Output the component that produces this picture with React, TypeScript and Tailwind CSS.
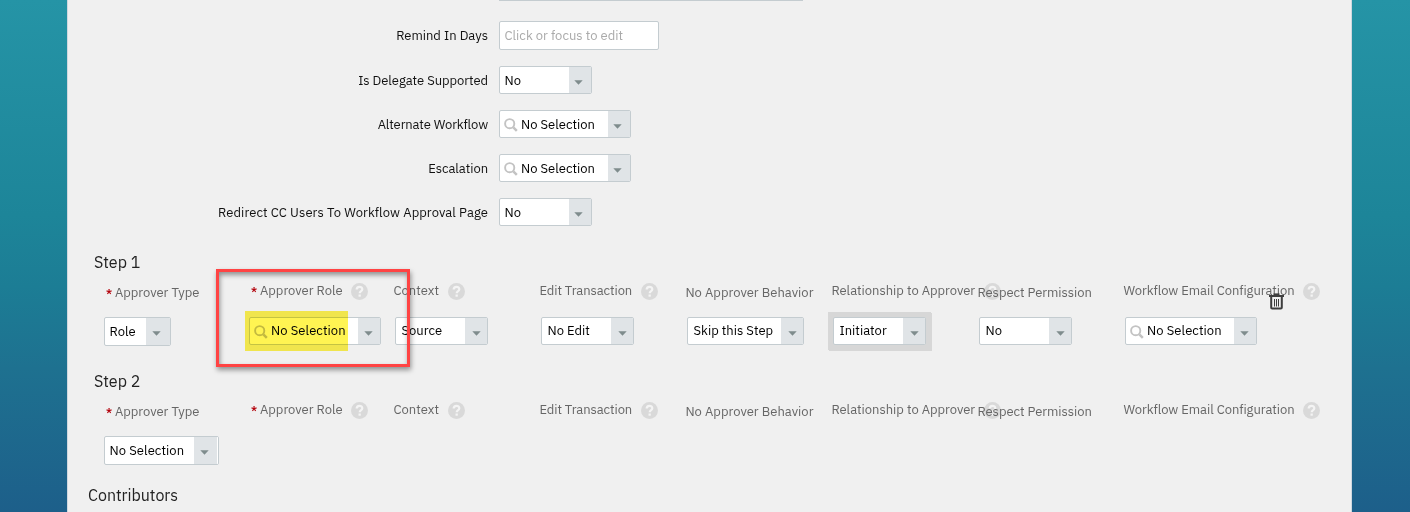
import React from "react";

const TEXT = "whitespace-nowrap text-[13px] leading-[18px]";

function SearchIcon() {
  return (
    <svg width="14" height="14" viewBox="0 0 14 14" fill="none" stroke="#c3c3c3" className="mt-0.5 shrink-0">
      <circle cx="5.7" cy="5.7" r="4.6" strokeWidth="1.9" />
      <path d="M9.3 9.3L12.8 12.8" strokeWidth="2.5" />
    </svg>
  );
}

function Help({ className = "" }: { className?: string }) {
  return (
    <svg width="17" height="17" viewBox="0 0 17 17" fill="none" className={`shrink-0 ${className}`}>
      <circle cx="8.5" cy="8.5" r="8.5" fill="#d9d9d9" />
      <path d="M5.7 6.6C5.7 3 11.3 3.1 11.3 6.3C11.3 8.2 8.7 8 8.7 10.3" stroke="#f4f4f4" strokeWidth="2.2" />
      <rect x="7.5" y="11.5" width="2.3" height="2.2" fill="#f4f4f4" />
    </svg>
  );
}

function Trash() {
  return (
    <svg width="15" height="17" viewBox="0 0 15 17" fill="none" stroke="#3e3e3e">
      <path d="M0 3H15" strokeWidth="2" />
      <path d="M4.5 1.2H10.5" strokeWidth="1.6" />
      <path d="M2.2 4V14.6Q2.2 15.6 3.2 15.6H11.8Q12.8 15.6 12.8 14.6V4" strokeWidth="2" />
      <path d="M5.5 6V13.5M7.5 6V13.5M9.5 6V13.5" strokeWidth="1" />
    </svg>
  );
}

type SelectProps = {
  value: string;
  size: string;
  search?: boolean;
  text?: string;
  arrow?: string;
};

function Select({ value, size, search, text = "", arrow = "w-[22px]" }: SelectProps) {
  return (
    <div className={`flex shrink-0 overflow-hidden rounded-xs border border-[#c4ccd0] bg-white ${size}`}>
      <div className={`flex min-w-0 flex-1 items-center ${search ? "gap-[3px] pl-1" : "pl-[5.5px]"}`}>
        {search && <SearchIcon />}
        <span className={`${TEXT} ${text} text-black`}>{value}</span>
      </div>
      <div className={`flex shrink-0 items-center justify-center bg-[#e0e4e7] pt-1 ${arrow}`}>
        <svg width="9" height="5" viewBox="0 0 9 5" className="shrink-0">
          <path d="M0.3 0.2H8.7L4.5 4.8Z" fill="#7f8c8d" />
        </svg>
      </div>
    </div>
  );
}

function FormRow({ label, tracking, children }: { label: string; tracking: string; children: React.ReactNode }) {
  return (
    <div className="flex items-center gap-[11px]">
      <div className={`w-[420px] text-right ${TEXT} ${tracking} text-[#111]`}>{label}</div>
      {children}
    </div>
  );
}

type Field = { label: string; tracking: string; width: string; required?: boolean; help?: boolean };

const fields: Field[] = [
  { label: "Approver Type", tracking: "tracking-[-0.02px]", width: "w-[145px]", required: true },
  { label: "Approver Role", tracking: "tracking-[0px]", width: "w-[142.4px]", required: true, help: true },
  { label: "Context", tracking: "tracking-[0.05px]", width: "w-[146px]", help: true },
  { label: "Edit Transaction", tracking: "tracking-[-0.08px]", width: "w-[146px]", help: true },
  { label: "No Approver Behavior", tracking: "tracking-[0.02px]", width: "w-[146px]" },
  { label: "Relationship to Approver", tracking: "tracking-[-0.02px]", width: "w-[146px]", help: true },
  { label: "Respect Permission", tracking: "tracking-[-0.03px]", width: "w-[146px]" },
  { label: "Workflow Email Configuration", tracking: "tracking-[-0.05px]", width: "w-[220px]", help: true },
];

function FieldLabels() {
  return (
    <div className="flex h-5">
      {fields.map((f) => (
        <div key={f.label} className={`flex shrink-0 items-start ${f.width}`}>
          {f.required && (
            <span className={`w-[9px] shrink-0 ${f.help ? "" : "mt-0.5"} whitespace-nowrap text-[11px] leading-[18px] font-semibold text-[#b3000a]`}>*</span>
          )}
          <span className={`${f.help ? "" : "mt-0.5"} ${TEXT} ${f.tracking} text-[#666]`}>{f.label}</span>
          {f.help && <Help className="mt-[1.4px] ml-[8.6px]" />}
        </div>
      ))}
    </div>
  );
}

export default function App() {
  return (
    <div className="h-[512px] w-[1410px] overflow-hidden bg-[linear-gradient(#2594a6_0%,#1d8599_42%,#1c7d95_56%,#1e7190_72%,#1d5f8a_100%)] pr-[58px] pl-[67px] font-['IBM_Plex_Sans','Noto_Sans',sans-serif]">
      <main className="relative h-full border-x border-[#d0d7df] bg-[#f0f0f0]">
        <div className="ml-[431px] h-px w-[304px] bg-[#c4ccd0]" />
        <div className="flex flex-col gap-4 pt-5">
          <FormRow label="Remind In Days" tracking="tracking-[0px]">
            <div className="flex h-[29px] w-40 items-center rounded-xs border border-[#c4ccd0] bg-white pl-[4.5px]">
              <span className={`${TEXT} text-[#aaa]`}>Click or focus to edit</span>
            </div>
          </FormRow>
          <FormRow label="Is Delegate Supported" tracking="tracking-[-0.05px] pt-0.5">
            <Select value="No" size="h-7 w-[93px]" text="-ml-px pt-0.5" arrow="w-[22px] pr-[3px]" />
          </FormRow>
          <FormRow label="Alternate Workflow" tracking="tracking-[-0.12px] pt-0.5">
            <Select value="No Selection" size="h-7 w-[132px]" search text="pt-0.5" arrow="w-[22px] pr-[3px]" />
          </FormRow>
          <FormRow label="Escalation" tracking="tracking-[-0.05px] pt-0.5">
            <Select value="No Selection" size="h-7 w-[132px]" search text="pt-0.5" arrow="w-[22px] pr-[3px]" />
          </FormRow>
          <FormRow label="Redirect CC Users To Workflow Approval Page" tracking="tracking-[0.08px] pt-0.5">
            <Select value="No" size="h-7 w-[93px]" text="-ml-px pt-0.5" arrow="w-[22px] pr-[3px]" />
          </FormRow>
        </div>

        <section className="h-[119px] pt-[26px]">
          <h2 className="pl-[26px] text-[16px] leading-5 text-[#222]">Step 1</h2>
          <div className="mt-2.5 pl-[38px]">
            <FieldLabels />
          </div>
          <div className="mt-[15px] flex h-[29px] items-start pl-9">
            <div className="w-[145px] shrink-0">
              <Select value="Role" size="h-[29px] w-[67px]" text="-ml-px" arrow="w-6 pr-1" />
            </div>
            <div className="w-[146px] shrink-0">
              <Select value="No Selection" size="h-7 w-[132px]" search text="tracking-[0.06px]" arrow="w-[22px] pr-0.5" />
            </div>
            <div className="w-[146px] shrink-0">
              <Select value="Source" size="h-7 w-[93px]" />
            </div>
            <div className="w-[146px] shrink-0">
              <Select value="No Edit" size="h-7 w-[93px]" />
            </div>
            <div className="w-[146px] shrink-0">
              <Select value="Skip this Step" size="h-7 w-[117px]" />
            </div>
            <div className="w-[146px] shrink-0">
              <div className="w-[93px] bg-[#d7d7d7] shadow-[0_0_0_5px_#d7d7d7,1px_1px_0_5px_#d7d7d7]">
                <Select value="Initiator" size="h-7 w-[93px]" />
              </div>
            </div>
            <div className="w-[146px] shrink-0">
              <Select value="No" size="h-7 w-[93px]" />
            </div>
            <Select value="No Selection" size="h-7 w-[132px]" search text="tracking-[0.06px]" arrow="w-[22px] pr-0.5" />
          </div>
        </section>

        <section className="h-[119px] pt-[26px]">
          <h2 className="pl-[26px] text-[16px] leading-5 text-[#222]">Step 2</h2>
          <div className="mt-2.5 pl-[38px]">
            <FieldLabels />
          </div>
          <div className="mt-[15px] pl-9">
            <Select value="No Selection" size="h-[29px] w-[115px]" text="-ml-px tracking-[0.06px]" arrow="w-6 border-r border-white pr-[3px]" />
          </div>
        </section>

        <h2 className="pt-[21px] pl-5 text-[16px] leading-5 text-[#222]">Contributors</h2>

        <div className="absolute top-[293px] left-[1201px]">
          <Trash />
        </div>
        <div className="absolute top-[311px] left-[177px] h-10 w-[103px] bg-[#fff452] mix-blend-multiply" />
        <div className="absolute top-[269px] left-[148px] h-[98px] w-[194px] border-[3px] border-[#ff4343] shadow-[1px_3px_5px_rgba(0,0,0,0.4),inset_1px_3px_5px_rgba(0,0,0,0.4)]" />
      </main>
    </div>
  );
}
